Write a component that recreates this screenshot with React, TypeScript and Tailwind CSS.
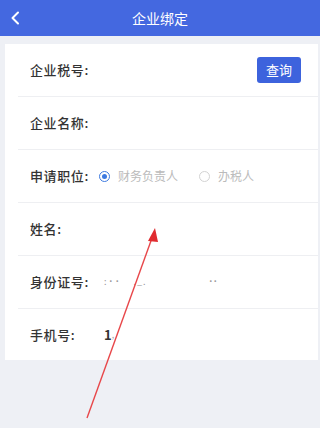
import React from "react";

const font = { fontFamily: '"Noto Sans CJK SC", "Noto Sans", sans-serif' };

function Row({ label, children, last }: { label: string; children?: React.ReactNode; last?: boolean }) {
  return (
    <div className={`ml-[13px] flex items-center pl-[12px] pr-[17px] ${last ? "h-[51px]" : "h-[53px] border-b border-[#eeeff2]"}`}>
      <span className="w-[74px] shrink-0 text-[13px] font-medium tracking-[0.6px] text-[#333]">{label}</span>
      <div className="flex flex-1 items-center">{children}</div>
    </div>
  );
}

export default function App() {
  return (
    <div className="relative h-[428px] w-[320px] overflow-hidden bg-[#eef0f5]" style={font}>
      <header className="relative flex h-[36px] items-center justify-center bg-[#4468e0]">
        <svg className="absolute left-[10px] top-[11px]" width="10" height="14" viewBox="0 0 10 14" fill="none">
          <path d="M8 1.5 2.5 7 8 12.5" stroke="white" strokeWidth="2" strokeLinecap="round" strokeLinejoin="round" />
        </svg>
        <h1 className="text-[14px] text-white">企业绑定</h1>
      </header>

      <div className="mx-[5px] mt-[8px] w-[313px] bg-white">
        <div className="ml-[13px] flex h-[53px] items-center border-b border-[#eeeff2] pl-[12px] pr-[17px]">
          <span className="text-[13px] font-medium tracking-[0.6px] text-[#333]">企业税号:</span>
          <button className="ml-auto flex h-[26px] w-[44px] items-center justify-center rounded-[3px] bg-[#3d63dd] text-[13px] text-white">
            查询
          </button>
        </div>
        <Row label="企业名称:" />
        <Row label="申请职位:">
          <span className="-ml-[5px] flex h-[11px] w-[11px] items-center justify-center rounded-full border border-[#3d7ae0]">
            <span className="h-[5px] w-[5px] rounded-full bg-[#3d7ae0]" />
          </span>
          <span className="ml-[8px] text-[12px] text-[#bbbbbb]">财务负责人</span>
          <span className="ml-[21px] h-[11px] w-[11px] rounded-full border border-[#d3d3d3]" />
          <span className="ml-[8px] text-[12px] text-[#bbbbbb]">办税人</span>
        </Row>
        <Row label="姓名:" />
        <Row label="身份证号:">
          <span className="text-[9px] tracking-[2px] text-[#999]">:˙˙</span>
          <span className="ml-[12px] text-[9px] tracking-[1px] text-[#999]">._.</span>
          <span className="ml-[62px] text-[9px] text-[#999]">˙˙</span>
        </Row>
        <Row label="手机号:" last>
          <span className="text-[13px] font-semibold text-[#333]">1</span>
          <span className="text-[9px] text-[#aaa]">,</span>
        </Row>
      </div>

      <svg className="pointer-events-none absolute left-0 top-0" width="320" height="428" viewBox="0 0 320 428">
        <line x1="87" y1="418" x2="152" y2="238" stroke="#e8474a" strokeWidth="1.4" />
        <polygon points="155,228 148,241 158,242" fill="#e02b2f" />
      </svg>
    </div>
  );
}
